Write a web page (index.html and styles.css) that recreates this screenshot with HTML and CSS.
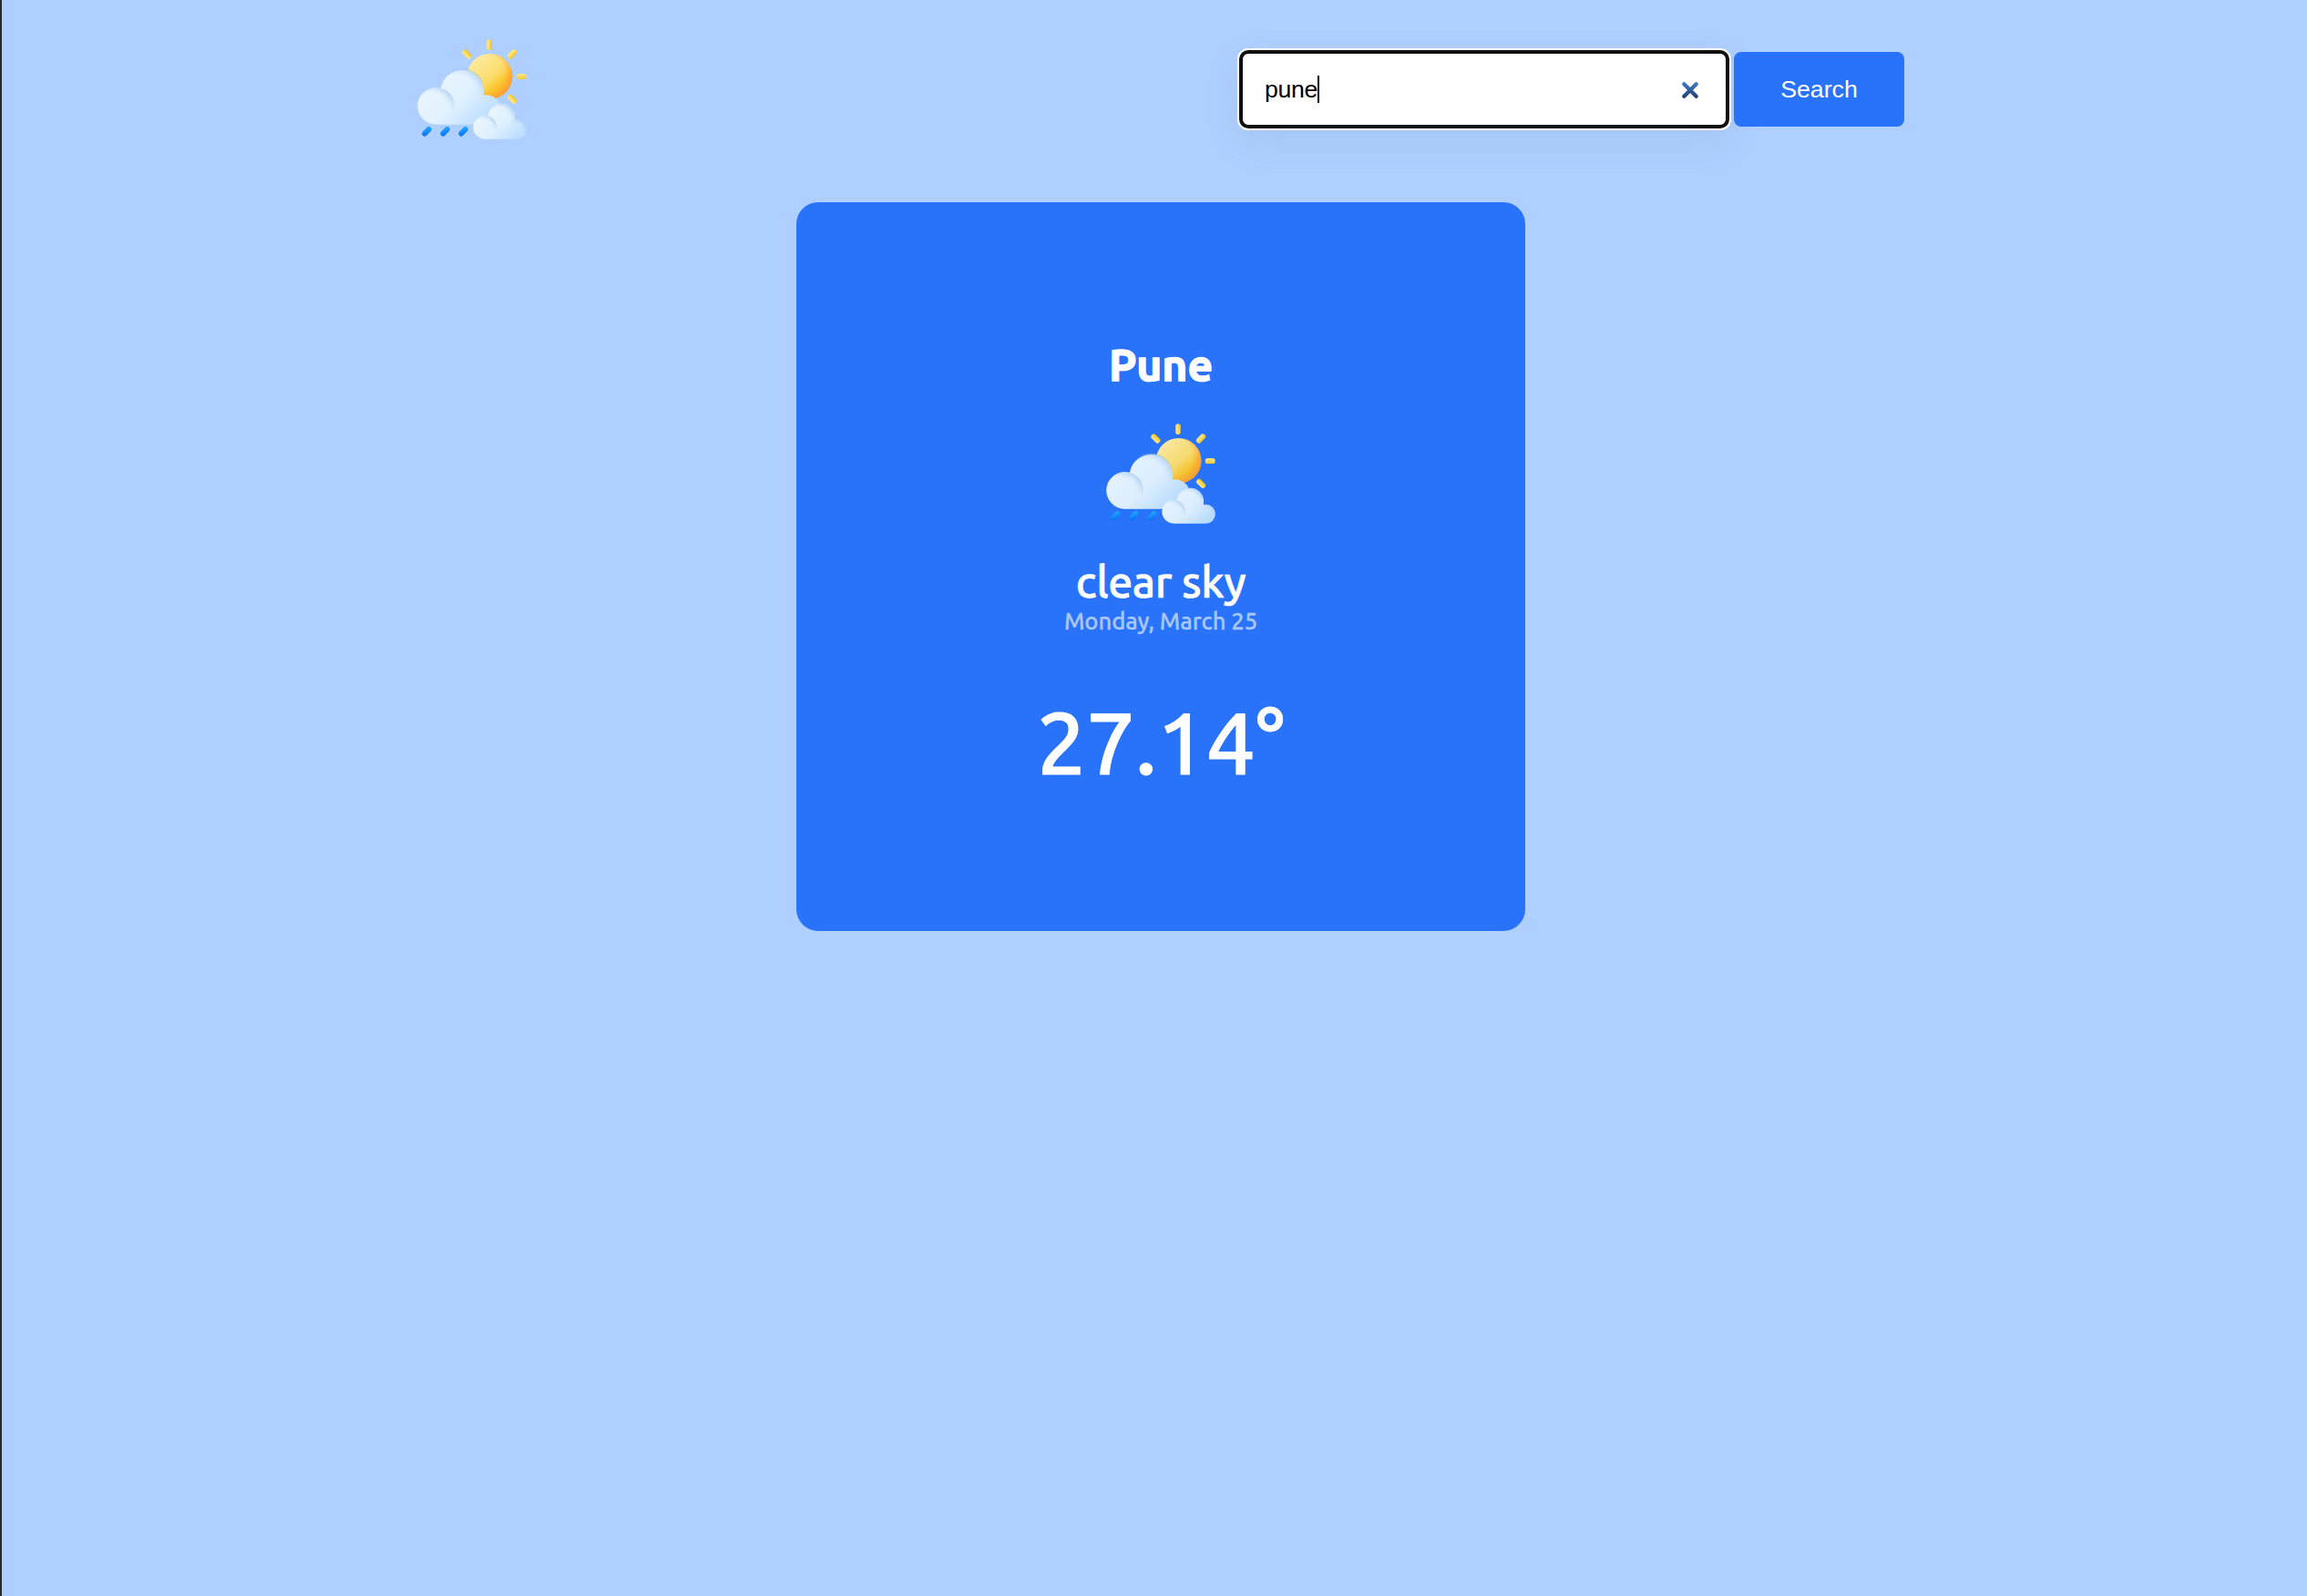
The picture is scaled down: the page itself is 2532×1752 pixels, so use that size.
FILE: index.html
```html
<!DOCTYPE html>
<html lang="en">
<head>
<meta charset="utf-8">
<title>Weather</title>
<link rel="stylesheet" href="styles.css">
</head>
<body>
<svg class="defs" width="0" height="0" aria-hidden="true">
  <defs>
    <linearGradient id="sun" x1=".2" y1=".15" x2=".85" y2=".9"><stop offset="0" stop-color="#fee99a"/><stop offset=".5" stop-color="#fbdc6c"/><stop offset=".75" stop-color="#f9c52b"/><stop offset="1" stop-color="#fcb42c"/></linearGradient>
    <radialGradient id="glow" cx=".4" cy=".42" r=".64"><stop offset=".65" stop-color="#ff9a35" stop-opacity="0"/><stop offset="1" stop-color="#ff9132" stop-opacity=".8"/></radialGradient>
    <linearGradient id="ray" x1="0" x2="1"><stop offset="0" stop-color="#fbe588"/><stop offset=".55" stop-color="#fbdc60"/><stop offset="1" stop-color="#f0bd19"/></linearGradient>
    <linearGradient id="rayFlat" x1="0" y1="0" x2="0" y2="1"><stop offset="0" stop-color="#fbe588"/><stop offset="1" stop-color="#f5ca35"/></linearGradient>
    <linearGradient id="cloud" gradientUnits="userSpaceOnUse" x1="120" y1="170" x2="280" y2="330"><stop offset="0" stop-color="#e9f5ff"/><stop offset=".45" stop-color="#e1f1ff"/><stop offset="1" stop-color="#b5daff"/></linearGradient>
    <linearGradient id="small" gradientUnits="userSpaceOnUse" x1="280" y1="280" x2="370" y2="380"><stop offset="0" stop-color="#eaf5ff"/><stop offset=".5" stop-color="#def0ff"/><stop offset="1" stop-color="#bbddff"/></linearGradient>
    <radialGradient id="puff" cx=".4" cy=".55" r=".6"><stop offset=".65" stop-color="#a8cdf0" stop-opacity="0"/><stop offset="1" stop-color="#9cc5ec" stop-opacity=".6"/></radialGradient>
    <linearGradient id="fade" x1=".9" y1=".1" x2=".6" y2=".65"><stop offset=".2" stop-color="#fff"/><stop offset=".75" stop-color="#000"/></linearGradient>
    <mask id="fadeMask" maskContentUnits="objectBoundingBox"><rect width="1" height="1" fill="url(#fade)"/></mask>
    <linearGradient id="drop" x1="0" y1="0" x2="1" y2="1"><stop offset=".2" stop-color="#22a4ff"/><stop offset="1" stop-color="#0067f5"/></linearGradient>
    <symbol id="weather" viewBox="54 38 360 332">
      <circle cx="293" cy="161" r="75" fill="url(#sun)"/>
      <circle cx="293" cy="161" r="75" fill="url(#glow)"/>
      <rect x="283" y="39" width="17" height="35" rx="8" fill="url(#ray)"/>
      <rect x="381" y="153" width="33" height="18" rx="8" fill="url(#rayFlat)"/>
      <rect x="358" y="70" width="18" height="35" rx="8" fill="url(#ray)" transform="rotate(45 367 87.500)"/>
      <rect x="208" y="70" width="18" height="35" rx="8" fill="url(#ray)" transform="rotate(-45 217 87.500)"/>
      <rect x="358" y="219" width="18" height="35" rx="8" fill="url(#ray)" transform="rotate(-45 367 236.500)"/>
      <path d="M115 321a61.500 61.500 0 1 1 16-120.900a71.500 71.500 0 0 1 142 9.400q0 8-1 14a50 50 0 0 1 59 49a48.500 48.500 0 0 1-49 48.500z" fill="url(#cloud)"/>
      <circle cx="202" cy="207" r="71.500" fill="url(#puff)" mask="url(#fadeMask)"/>
      <circle cx="115" cy="259.500" r="61.500" fill="url(#puff)" mask="url(#fadeMask)"/>
      <g class="drops">
        <rect x="75" y="325" width="18" height="37" rx="9" fill="url(#drop)" transform="rotate(44 84 343.500)"/>
        <rect x="136" y="325" width="18" height="37" rx="9" fill="url(#drop)" transform="rotate(44 145 343.500)"/>
        <rect x="196" y="325" width="18" height="37" rx="9" fill="url(#drop)" transform="rotate(44 205 343.500)"/>
      </g>
      <path d="M277 369a39 39 0 1 1 10-76.700a44.500 44.500 0 0 1 89 8v6.500a31.500 31.500 0 1 1 7 62.200z" fill="url(#small)"/>
      <circle cx="331.500" cy="296" r="44.500" fill="url(#puff)" mask="url(#fadeMask)"/>
      <circle cx="277" cy="330" r="38.500" fill="url(#puff)" mask="url(#fadeMask)"/>
      <circle cx="383" cy="337" r="31.500" fill="url(#puff)" mask="url(#fadeMask)"/>
    </symbol>
  </defs>
</svg>
<div class="page">
  <header class="header">
    <svg class="icon"><use href="#weather"/></svg>
    <form class="search">
      <div class="field">
        <span class="query">pune</span><span class="caret"></span>
        <svg class="clear" viewBox="0 0 20 20"><defs><linearGradient id="x" gradientUnits="userSpaceOnUse" x1="0" y1="0" x2="0" y2="20"><stop offset="0" stop-color="#4180cd"/><stop offset="1" stop-color="#20396a"/></linearGradient></defs><path d="M3.300 3.300 16.700 16.700M16.700 3.300 3.300 16.700" stroke="url(#x)" stroke-width="4.300" stroke-linecap="round"/></svg>
      </div>
      <button class="button" type="button">Search</button>
    </form>
  </header>
  <main class="card">
    <h1 class="city">Pune</h1>
    <svg class="icon"><use href="#weather"/></svg>
    <p class="sky">clear sky</p>
    <p class="date">Monday, March 25</p>
    <p class="temp">27.14°</p>
  </main>
</div>
</body>
</html>
```
FILE: styles.css
```css
* { box-sizing: border-box; }

body {
  margin: 0;
  min-height: 1752px;
  background: #aecfff;
  border-left: 2px solid #2b2b2b;
  font-family: Ubuntu, "Noto Sans", sans-serif;
}

.defs { display: block; }

.page {
  width: 1632px;
  margin-left: 456px;
}

.header {
  display: flex;
  justify-content: space-between;
  align-items: flex-start;
  height: 222px;
  padding-top: 43px;
}

.icon {
  display: block;
  width: 120px;
  height: 110px;
}

.search {
  display: flex;
  align-items: center;
  gap: 5px;
  margin-top: 12px;
  font-family: "Liberation Sans", Arial, sans-serif;
  font-size: 26.67px;
}

.field {
  display: flex;
  align-items: center;
  width: 538px;
  height: 86px;
  padding: 0 29px 0 24px;
  border: 4px solid #101010;
  border-radius: 10px;
  background: #fff;
  box-shadow: 0 0 0 2px #fff, 0 14px 40px rgba(110, 130, 150, .12);
  color: #000;
}

.query { letter-spacing: -.3px; }

.caret {
  width: 2px;
  height: 30px;
  background: #000;
}

.clear {
  width: 20px;
  height: 20px;
  margin-left: auto;
  margin-top: 2px;
}

.button {
  position: relative;
  width: 187px;
  height: 82px;
  padding: 0;
  border: 0;
  border-radius: 8px;
  background: #2973fb;
  color: #fff;
  font: inherit;
}

.card {
  display: flex;
  flex-direction: column;
  align-items: center;
  width: 800px;
  height: 800px;
  margin: 0 auto;
  padding-top: 150px;
  border-radius: 24px;
  background: #2973fb;
  color: #fff;
}

.card .icon { opacity: .98; }

.city {
  margin: 0 0 37px;
  font-size: 48px;
  line-height: 56px;
  -webkit-text-stroke: 1.4px #fff;
}

.sky {
  margin: 35px 0 0;
  font-size: 48px;
  font-weight: 500;
  line-height: 56px;
  letter-spacing: -.4px;
  -webkit-text-stroke: .6px #fff;
}

.date {
  margin: 0;
  font-size: 25.6px;
  font-weight: 500;
  line-height: 32px;
  letter-spacing: -.05px;
  color: #a9c7fd;
  -webkit-text-stroke: .3px #a9c7fd;
}

.temp {
  margin: 62px 0 0;
  font-size: 96px;
  font-weight: 500;
  line-height: 110px;
  -webkit-text-stroke: .8px #fff;
}
```
